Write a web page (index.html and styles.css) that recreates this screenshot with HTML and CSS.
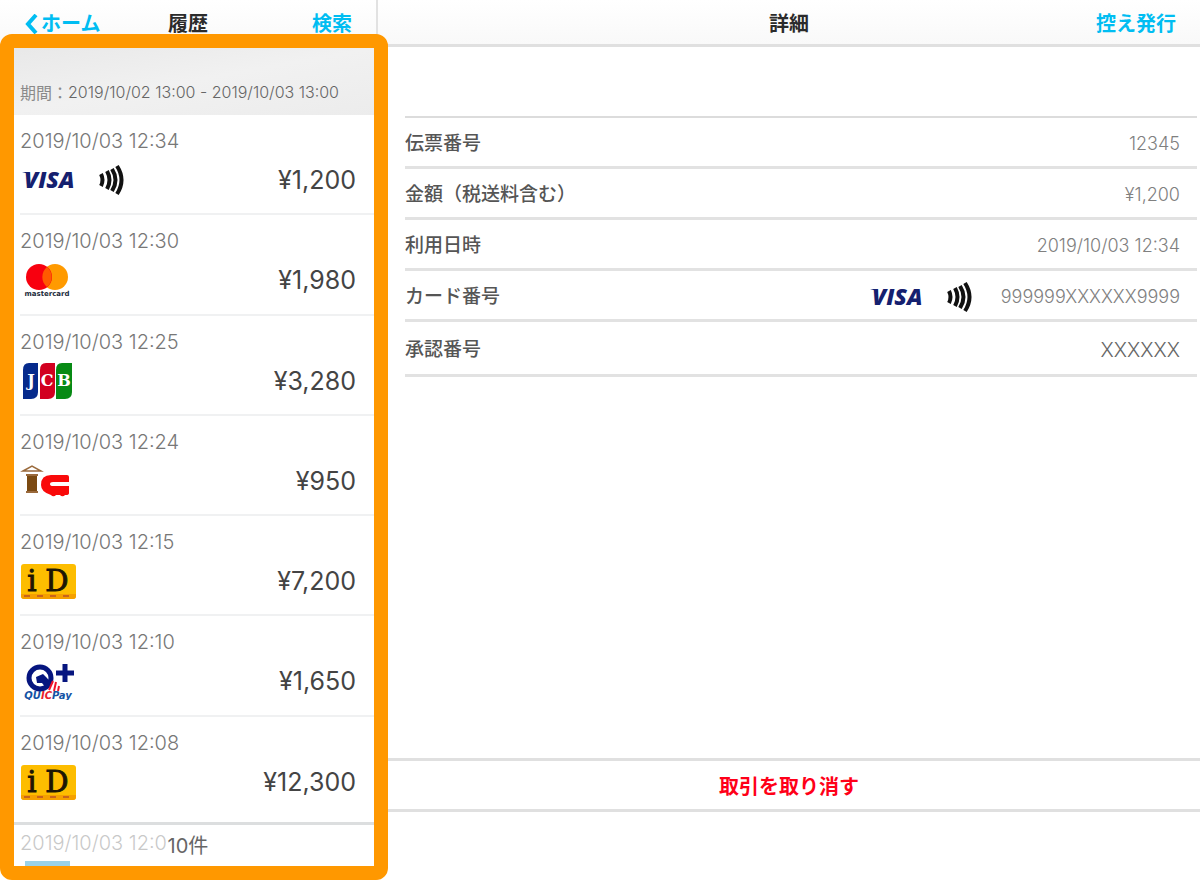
FILE: index.html
```html
<!DOCTYPE html>
<html lang="ja">
<head>
  <meta charset="UTF-8" />
  <meta name="viewport" content="width=device-width, initial-scale=1.0" />
  <title>履歴</title>
  <link rel="stylesheet" href="styles.css">
</head>
<body>
  <!-- shared logos -->
  <svg class="defs" aria-hidden="true">
    <symbol id="visa" viewBox="0 0 56 38">
      <path d="M2 11h7l1 3q-3-2-8-3z" fill="#15206f"/>
      <text x="4" y="27" class="visa-text">VISA</text>
    </symbol>
    <symbol id="touch" viewBox="0 0 28 38">
      <g fill="none" stroke="#111" stroke-width="4">
        <path d="M2 13q3 6 0 12"/>
        <path d="M8 10q5 9 0 18"/>
        <path d="M13 8q7 11 0 22"/>
        <path d="M18 5q9 14 0 28"/>
      </g>
    </symbol>
    <symbol id="mastercard" viewBox="0 0 56 38">
      <circle cx="35" cy="16" r="13" fill="#ff9a00"/>
      <circle cx="19" cy="16" r="13" fill="#f8000f"/>
      <path d="M27 6a13 13 0 0 1 0 20a13 13 0 0 1 0-20z" fill="#ff5a00"/>
      <text x="27" y="35" class="mc-text">mastercard</text>
    </symbol>
    <symbol id="jcb" viewBox="0 0 56 38">
      <path d="M9 1h9v29q0 7-7 7H3V8q0-7 6-7z" fill="#062a8c"/>
      <path d="M26 1h9v29q0 7-7 7h-8V8q0-7 6-7z" fill="#d20020"/>
      <path d="M42 1h10v29q0 7-7 7h-9V8q0-7 6-7z" fill="#078a14"/>
      <g class="jcb-text">
        <text x="11" y="24">J</text>
        <text x="27" y="24">C</text>
        <text x="44" y="24">B</text>
      </g>
    </symbol>
    <symbol id="ic" viewBox="0 0 56 38">
      <path d="M3 9l9-5 9 5H3z" fill="#fff" stroke="#9a6a3c" stroke-width="1.5"/>
      <path d="M7 13h10v18H7z" fill="#7b4a12"/>
      <path d="M6 13h12M6 30h12" stroke="#9a6a3c" stroke-width="2"/>
      <path d="M30 13h17q2 0 2 2v5H33q-3 0-3 2t3 2h16v7q0 2-3 2h-1a3 3 0 0 1-5 0h-4a3 3 0 0 1-5 0q-10-3-10-10 0-10 10-10z" fill="#f90a0a"/>
    </symbol>
    <symbol id="id" viewBox="0 0 56 38">
      <rect x="1" y="2" width="55" height="35" rx="3" fill="#fdbd00"/>
      <path d="M1 32h55v2q0 3-3 3H4q-3 0-3-3z" fill="#f5a000"/>
      <path d="M4 34h50" stroke="#c9641c" stroke-width="2" stroke-dasharray="6 7"/>
      <g class="id-text">
        <text x="12" y="29">i</text>
        <text x="37" y="29">D</text>
      </g>
    </symbol>
    <symbol id="quicpay" viewBox="0 0 56 38">
      <circle cx="20" cy="16" r="11" fill="none" stroke="#06157f" stroke-width="5"/>
      <path d="M16 15l7-3 4 4 4 5-5 5-4-5-5 0z" fill="#06157f"/>
      <path d="M36 11h18M45 2v18" stroke="#06157f" stroke-width="5"/>
      <path d="M33 19l-4 9M36 20l-2 9M39 24l-1 5" fill="none" stroke="#f0142a" stroke-width="2"/>
      <text x="28" y="37" class="qp-text">QU<tspan fill="#e8202c">IC</tspan>Pay</text>
    </symbol>
  </svg>

  <div class="app">
    <aside class="sidebar">
      <header class="bar">
        <a href="#" class="bar-link">
          <svg class="chevron" viewBox="0 0 14 20"><path d="M12 1L4 10l8 9" fill="none" stroke="currentColor" stroke-width="4"/></svg>ホーム
        </a>
        <h1>履歴</h1>
        <button class="bar-link">検索</button>
      </header>

      <div class="period">期間：<span>2019/10/02 13:00 - 2019/10/03 13:00</span></div>

      <ul class="history">
        <li>
          <time>2019/10/03 12:34</time>
          <div class="line">
            <svg class="logo"><use href="#visa"/></svg>
            <svg class="touch"><use href="#touch"/></svg>
            <span class="amount">¥1,200</span>
          </div>
        </li>
        <li>
          <time>2019/10/03 12:30</time>
          <div class="line"><svg class="logo"><use href="#mastercard"/></svg><span class="amount">¥1,980</span></div>
        </li>
        <li>
          <time>2019/10/03 12:25</time>
          <div class="line"><svg class="logo"><use href="#jcb"/></svg><span class="amount">¥3,280</span></div>
        </li>
        <li>
          <time>2019/10/03 12:24</time>
          <div class="line"><svg class="logo"><use href="#ic"/></svg><span class="amount">¥950</span></div>
        </li>
        <li>
          <time>2019/10/03 12:15</time>
          <div class="line"><svg class="logo"><use href="#id"/></svg><span class="amount">¥7,200</span></div>
        </li>
        <li>
          <time>2019/10/03 12:10</time>
          <div class="line"><svg class="logo"><use href="#quicpay"/></svg><span class="amount">¥1,650</span></div>
        </li>
        <li class="last">
          <time>2019/10/03 12:08</time>
          <div class="line"><svg class="logo"><use href="#id"/></svg><span class="amount">¥12,300</span></div>
        </li>
        <li class="cut">
          <time>2019/10/03 12:0</time>
          <div class="chip"></div>
        </li>
      </ul>

      <div class="count">10件</div>
      <div class="frame"></div>
    </aside>

    <main class="detail">
      <header class="bar">
        <h2>詳細</h2>
        <button class="bar-link">控え発行</button>
      </header>

      <dl>
        <div><dt>伝票番号</dt><dd>12345</dd></div>
        <div><dt>金額（税送料含む）</dt><dd>¥1,200</dd></div>
        <div><dt>利用日時</dt><dd>2019/10/03 12:34</dd></div>
        <div>
          <dt>カード番号</dt>
          <dd>
            <svg class="logo"><use href="#visa"/></svg>
            <svg class="touch"><use href="#touch"/></svg>
            <span class="card-no">999999XXXXXX9999</span>
          </dd>
        </div>
        <div><dt>承認番号</dt><dd class="approval">XXXXXX</dd></div>
      </dl>

      <button class="cancel">取引を取り消す</button>
    </main>
  </div>
</body>
</html>
```
FILE: styles.css
```css
* {
  box-sizing: border-box;
}

body {
  margin: 0;
  font-family: Inter, "Noto Sans CJK JP", sans-serif;
  color: #333;
  background: #fff;
}

h1, h2, ul, dl, dd {
  margin: 0;
  padding: 0;
}

button {
  font-family: inherit;
  border: none;
  background: none;
  padding: 0;
  cursor: pointer;
}

.defs {
  display: none;
}

.app {
  display: flex;
  height: 100vh;
}

/* top bars */
.bar {
  display: grid;
  grid-template-columns: 1fr auto 1fr;
  align-items: center;
  height: 47px;
  padding: 3px 24px 0;
  border-bottom: 3px solid #e0e0e0;
  background: linear-gradient(#fff, #f9f9f9);
}

.bar h1, .bar h2 {
  grid-column: 2;
  font-size: 20px;
  line-height: 24px;
  font-weight: 700;
  color: #2b2b2b;
}

.bar-link {
  display: flex;
  align-items: center;
  font-size: 20px;
  line-height: 24px;
  font-weight: 700;
  color: #00bdf2;
  text-decoration: none;
}

.bar button {
  grid-column: 3;
  justify-self: end;
}

.chevron {
  width: 14px;
  height: 20px;
  margin-right: 3px;
}

/* history list */
.sidebar {
  position: relative;
  display: flex;
  flex-direction: column;
  flex: 0 0 378px;
  border-right: 2px solid #e2e2e2;
  padding-bottom: 14px;
}

.period {
  display: flex;
  align-items: center;
  height: 68px;
  padding: 22px 20px 0;
  font-size: 16px;
  color: #8a8a8a;
  background: linear-gradient(170deg, #e8e8e8, #f1f1f1 50%, #ececec);
}

.period span {
  font-weight: 300;
  color: #666;
}

.history {
  flex: 1;
  min-height: 0;
  display: flex;
  flex-direction: column;
  list-style: none;
  padding-left: 20px;
}

.history li {
  flex: 1;
  padding: 14px 20px 0 0;
  border-bottom: 2px solid #f0f1f2;
}

.history time {
  display: block;
  font-size: 20px;
  line-height: 24px;
  font-weight: 300;
  color: #777;
}

.history .last {
  border-color: transparent;
}

.history .cut {
  flex: 0 0 49px;
  border: none;
  overflow: hidden;
}

.chip {
  width: 45px;
  height: 20px;
  margin: 6px 0 0 5px;
  background: #0090c8;
}

.line {
  display: flex;
  align-items: center;
  margin-top: 8px;
}

.logo {
  width: 56px;
  height: 38px;
}

.touch {
  width: 28px;
  height: 38px;
  margin-left: 23px;
}

.amount {
  margin-left: auto;
  font-size: 25px;
  line-height: 32px;
  color: #444;
}

.count {
  position: absolute;
  left: 0;
  right: 0;
  bottom: 14px;
  height: 44px;
  border-top: 3px solid #dcdedf;
  background: rgba(255, 255, 255, 0.6);
  font-size: 20px;
  line-height: 42px;
  text-align: center;
  color: #666;
}

.frame {
  position: absolute;
  top: 34px;
  left: 0;
  right: -12px;
  bottom: 0;
  border: 14px solid #ff9800;
  border-radius: 12px;
  pointer-events: none;
}

/* detail pane */
.detail {
  flex: 1;
  display: flex;
  flex-direction: column;
}

.detail dl {
  margin: 69px 3px 0 27px;
  border-top: 2px solid #dcdcdc;
}

.detail dl div {
  display: flex;
  justify-content: space-between;
  align-items: center;
  height: 51px;
  padding: 4px 17px 0 0;
  border-bottom: 3px solid #e2e2e2;
}

.detail dl div:last-child {
  height: 55px;
}

.detail dt {
  font-size: 19px;
  line-height: 24px;
  font-weight: 500;
  color: #555;
}

.detail dd {
  display: flex;
  align-items: center;
  font-size: 18px;
  line-height: 24px;
  font-weight: 300;
  color: #808080;
}

.detail .approval {
  font-size: 20px;
  color: #666;
}

.card-no {
  margin-left: 26px;
}

.cancel {
  height: 54px;
  margin: auto 0 68px;
  border-top: 3px solid #e0e0e0;
  border-bottom: 3px solid #e0e0e0;
  font-size: 20px;
  font-weight: 700;
  color: #ff0018;
}

/* logo lettering */
.visa-text {
  font: italic 800 23px "Open Sans", sans-serif;
  fill: #15206f;
}

.mc-text {
  font: 700 7px "DejaVu Sans", sans-serif;
  text-anchor: middle;
  fill: #1c2b3c;
}

.jcb-text {
  font: 700 16px "DejaVu Serif", serif;
  text-anchor: middle;
  fill: #fff;
}

.id-text {
  font: 400 29px "DejaVu Serif", serif;
  text-anchor: middle;
  fill: #1c1604;
  stroke: #1c1604;
}

.qp-text {
  font: italic 700 10px "DejaVu Sans", sans-serif;
  text-anchor: middle;
  fill: #1453a5;
}
```
